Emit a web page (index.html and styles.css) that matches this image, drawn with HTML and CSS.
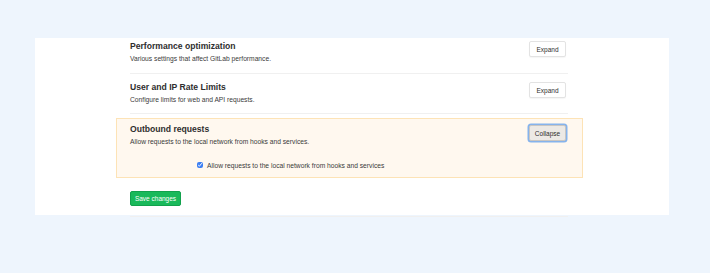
FILE: index.html
```html
<!DOCTYPE html>
<html lang="en">
<head>
  <meta charset="UTF-8">
  <meta name="viewport" content="width=device-width, initial-scale=1.0">
  <title>Network settings</title>
  <link rel="stylesheet" href="styles.css">
</head>
<body>

  <div class="panel">
    <div class="content">

      <div class="section first">
        <div class="section-head">
          <h4>Performance optimization</h4>
          <p>Various settings that affect GitLab performance.</p>
        </div>
        <button class="btn">Expand</button>
      </div>

      <div class="section">
        <div class="section-head">
          <h4>User and IP Rate Limits</h4>
          <p>Configure limits for web and API requests.</p>
        </div>
        <button class="btn">Expand</button>
      </div>

      <div class="section expanded">
        <div class="section-top">
          <div class="section-head">
            <h4>Outbound requests</h4>
            <p>Allow requests to the local network from hooks and services.</p>
          </div>
          <button class="btn focused">Collapse</button>
        </div>
        <label class="check-row">
          <input type="checkbox" checked>
          <span>Allow requests to the local network from hooks and services</span>
        </label>
      </div>

      <div class="actions">
        <button class="btn-save">Save changes</button>
      </div>

    </div>
  </div>

</body>
</html>
```

FILE: styles.css
```css
body {
  margin: 0;
  padding: 0;
  font-family: "Liberation Sans", Arial, sans-serif;
  background-color: #eef5fd;
  color: #2e2e2e;
  height: 273px;
  overflow: hidden;
}

.panel {
  background-color: #ffffff;
  margin: 38px 0 0 35px;
  width: 634px;
  height: 177px;
  padding-left: 95px;
  box-sizing: border-box;
}

.content {
  width: 438px;
}

.section {
  display: flex;
  justify-content: space-between;
  align-items: flex-start;
  padding: 8px 0 9px;
  border-bottom: 1px solid #f0f0f0;
}

.section.first {
  padding-top: 3px;
  padding-bottom: 10px;
}

.section-head h4 {
  margin: 0;
  font-size: 8.6px;
  line-height: 10px;
  font-weight: bold;
  color: #2e2e2e;
}

.section-head p {
  margin: 3px 0 0;
  font-size: 6.7px;
  line-height: 9px;
  color: #3a3a3a;
}

.btn {
  width: 37px;
  height: 16px;
  margin-right: 2px;
  padding: 0;
  background-color: #ffffff;
  border: 1px solid #e3e3e3;
  border-radius: 2px;
  box-shadow: 0 1px 1px rgba(0, 0, 0, 0.04);
  font-family: inherit;
  font-size: 6.5px;
  color: #2e2e2e;
  cursor: pointer;
}

.btn.focused {
  background-color: #ece9e5;
  border-color: #c9c6c2;
  box-shadow: 0 0 0 1.5px #86b3ec;
}

.section.expanded {
  display: block;
  margin: 4px -15px 0 -14px;
  padding: 5px 14px 7px 13px;
  background-color: #fff8ef;
  border: 1px solid #fde3b6;
}

.section.expanded .btn {
  margin-top: 1px;
}

.section-top {
  display: flex;
  justify-content: space-between;
  align-items: flex-start;
}

.check-row {
  display: flex;
  align-items: center;
  margin: 14px 0 0 67px;
  height: 10px;
  font-size: 6.7px;
  color: #3a3a3a;
}

.check-row input {
  width: 6px;
  height: 6px;
  margin: 0 4px 0 0;
  accent-color: #3d7ff2;
}

.actions {
  padding: 9px 0 10px;
  border-bottom: 1px solid #f0f0f0;
}

.btn-save {
  width: 51px;
  height: 15px;
  padding: 0;
  background-color: #19b95a;
  border: 1px solid #12a14c;
  border-radius: 2px;
  font-family: inherit;
  font-size: 6.5px;
  color: #ffffff;
  cursor: pointer;
}
```
